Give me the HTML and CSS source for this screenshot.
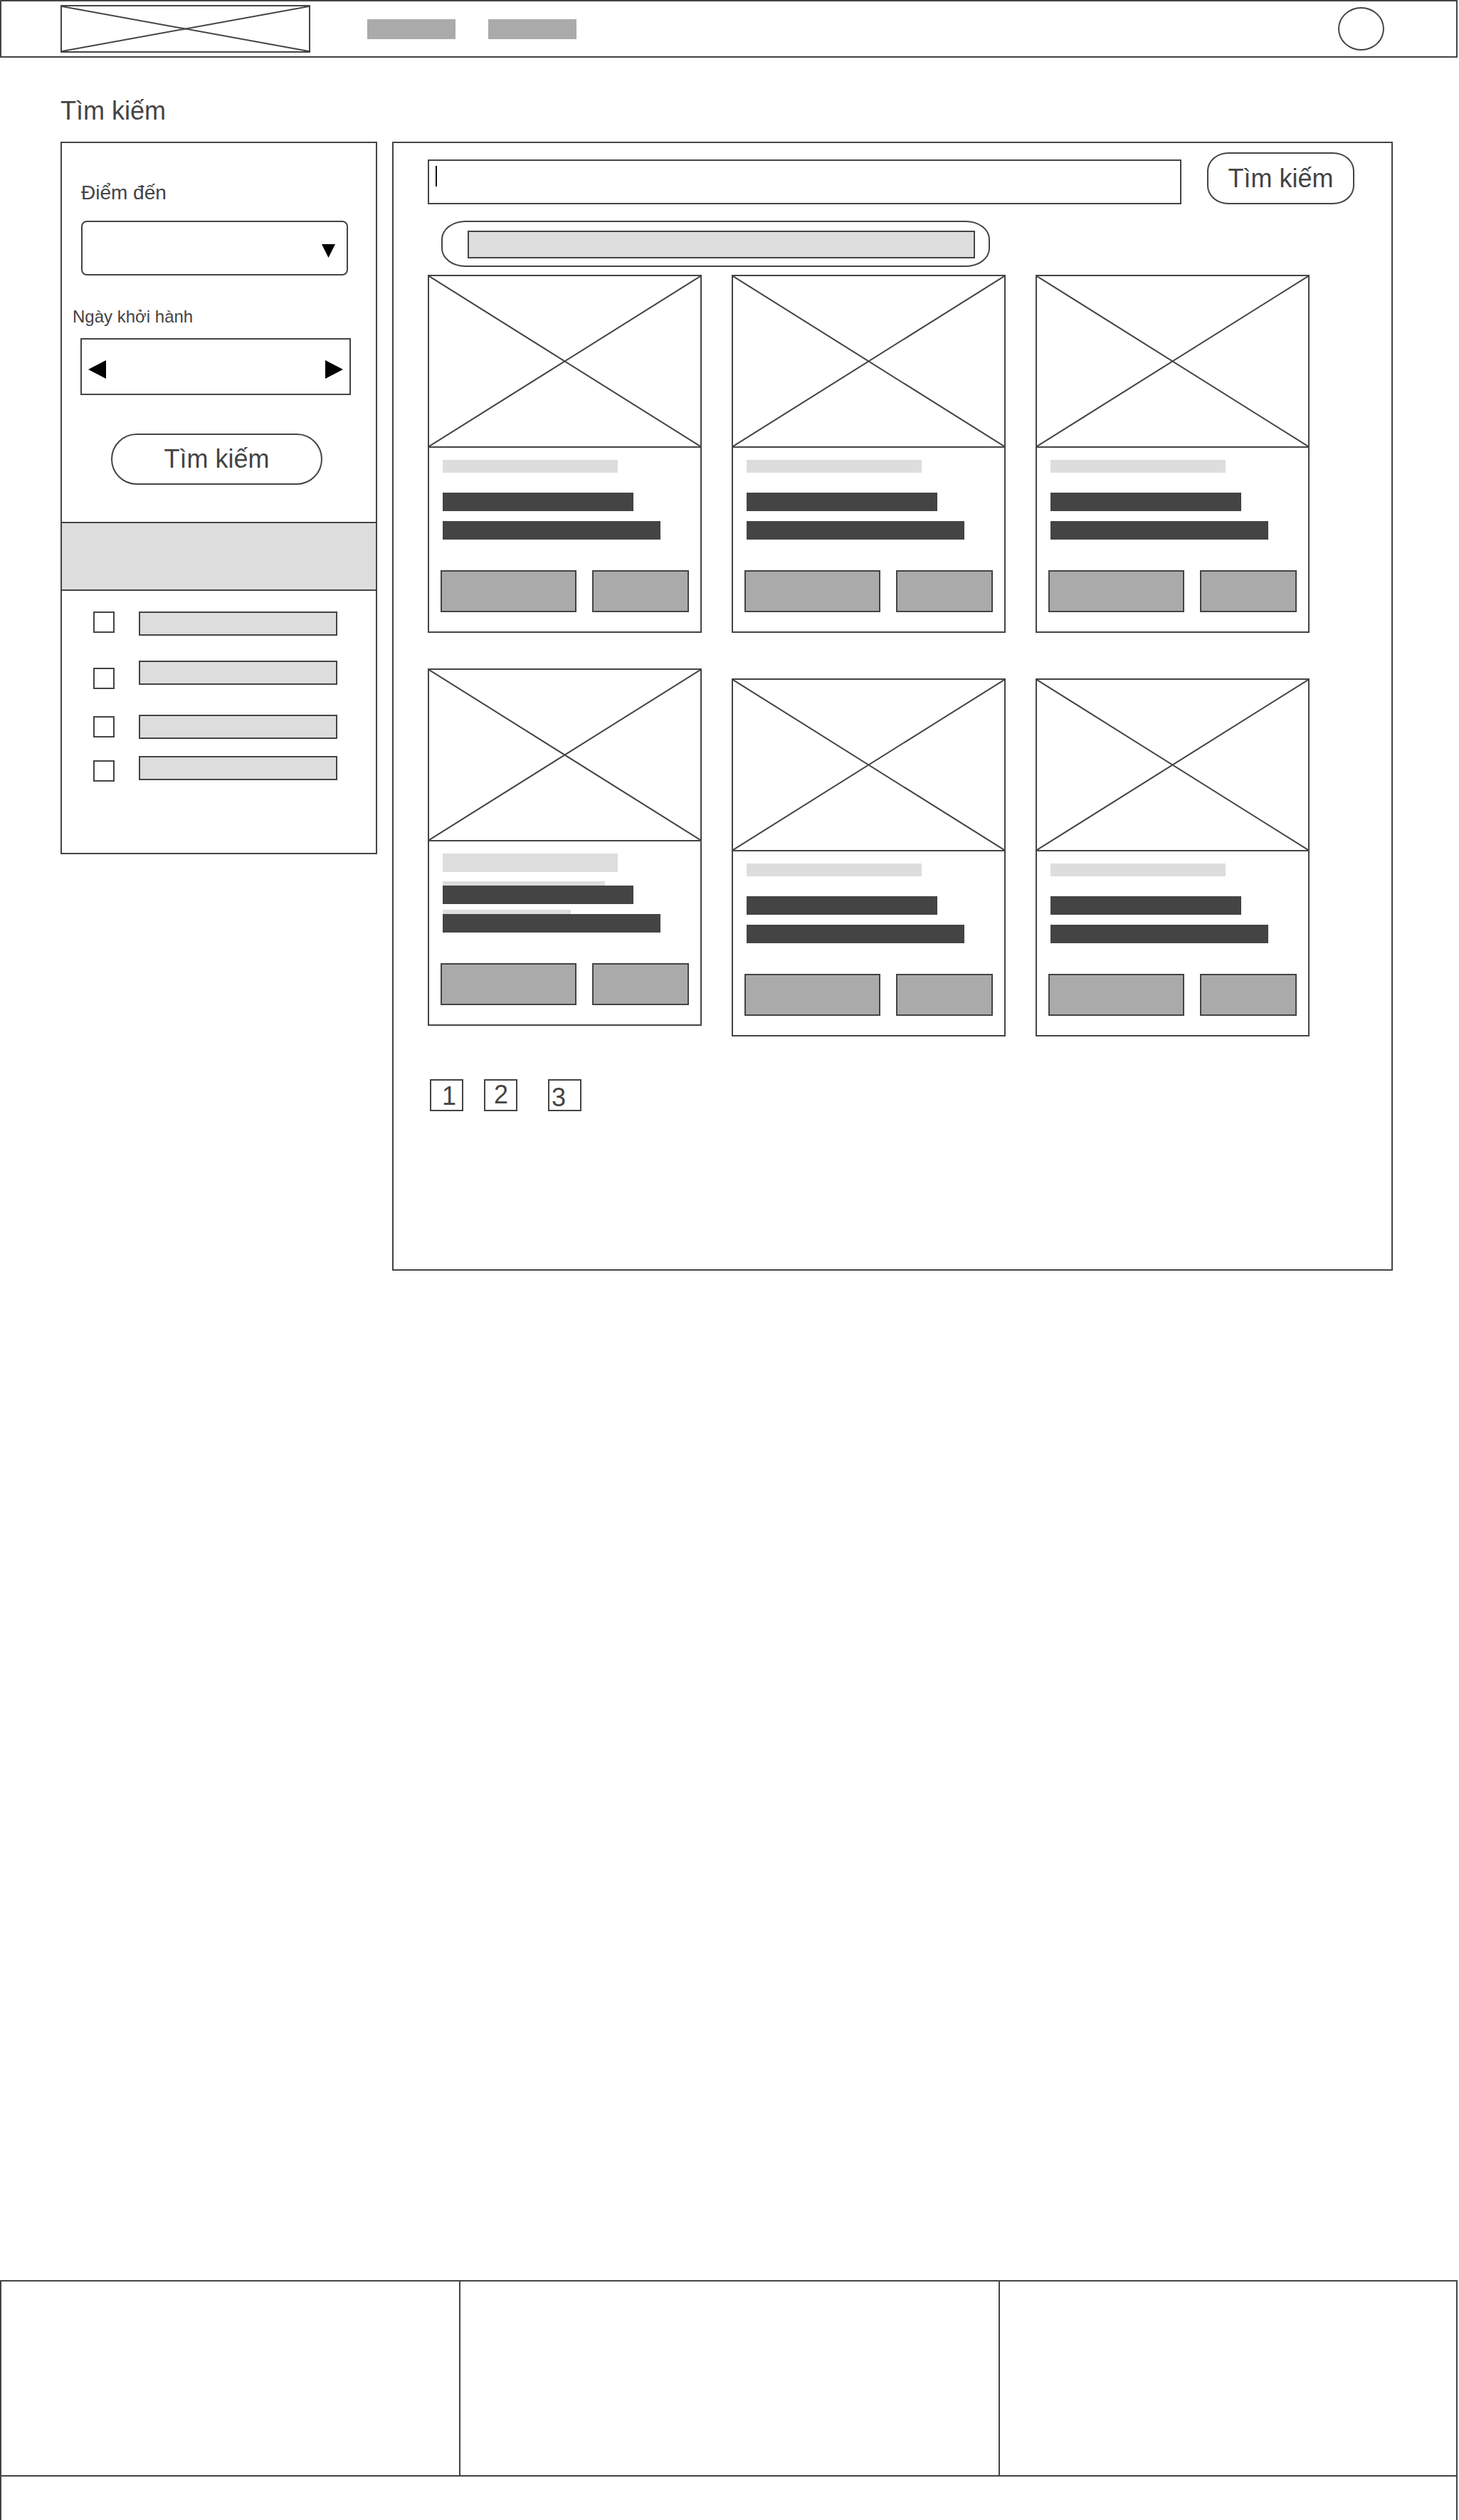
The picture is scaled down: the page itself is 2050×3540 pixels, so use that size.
FILE: index.html
```html
<!DOCTYPE html>
<html lang="vi">

<head>
    <meta charset="UTF-8">
    <meta name="viewport" content="width=device-width, initial-scale=1.0">
    <title>Tìm kiếm tour</title>

    <link rel="stylesheet" href="styles.css">
</head>

<body>
    <div class="page">
        <header class="topbar">
            <div class="logo">
                <svg class="x-mark" viewBox="0 0 100 100" preserveAspectRatio="none">
                    <line x1="0" y1="0" x2="100" y2="100" />
                    <line x1="100" y1="0" x2="0" y2="100" />
                </svg>
            </div>
            <span class="nav-item"></span>
            <span class="nav-item"></span>
            <span class="avatar"></span>
        </header>

        <main class="content">
            <h1 class="page-title">Tìm kiếm</h1>

            <div class="layout">
                <!-- bộ lọc bên trái -->
                <aside class="filter">
                    <label class="field-label">Điểm đến</label>
                    <div class="select-box">
                        <svg class="arrow-down" width="19" height="19" viewBox="0 0 19 19">
                            <polygon points="0,0 19,0 9.5,19" />
                        </svg>
                    </div>

                    <label class="field-label small">Ngày khởi hành</label>
                    <div class="date-box">
                        <svg class="arrow-side" width="25" height="26" viewBox="0 0 25 26">
                            <polygon points="25,0 25,26 0,13" />
                        </svg>
                        <svg class="arrow-side" width="25" height="26" viewBox="0 0 25 26">
                            <polygon points="0,0 25,13 0,26" />
                        </svg>
                    </div>

                    <button type="button" class="pill-btn">Tìm kiếm</button>

                    <div class="filter-band"></div>

                    <ul class="check-list">
                        <li class="check-item"><span class="check-box"></span><span class="check-label"></span></li>
                        <li class="check-item"><span class="check-box"></span><span class="check-label"></span></li>
                        <li class="check-item"><span class="check-box"></span><span class="check-label"></span></li>
                        <li class="check-item"><span class="check-box"></span><span class="check-label"></span></li>
                    </ul>
                </aside>

                <!-- kết quả -->
                <section class="results">
                    <div class="search-row">
                        <div class="search-input"><span class="caret"></span></div>
                        <button type="button" class="search-btn">Tìm kiếm</button>
                    </div>

                    <div class="chip">
                        <div class="chip-bar"></div>
                    </div>

                    <div class="card-row">
                        <div class="card">
                            <div class="card-img">
                                <svg class="x-mark" viewBox="0 0 100 100" preserveAspectRatio="none">
                                    <line x1="0" y1="0" x2="100" y2="100" />
                                    <line x1="100" y1="0" x2="0" y2="100" />
                                </svg>
                            </div>
                            <div class="card-body">
                                <div class="line-light"></div>
                                <div class="line-dark"></div>
                                <div class="line-dark long"></div>
                                <div class="card-actions">
                                    <span class="btn-main"></span>
                                    <span class="btn-sub"></span>
                                </div>
                            </div>
                        </div>
                        <div class="card">
                            <div class="card-img">
                                <svg class="x-mark" viewBox="0 0 100 100" preserveAspectRatio="none">
                                    <line x1="0" y1="0" x2="100" y2="100" />
                                    <line x1="100" y1="0" x2="0" y2="100" />
                                </svg>
                            </div>
                            <div class="card-body">
                                <div class="line-light"></div>
                                <div class="line-dark"></div>
                                <div class="line-dark long"></div>
                                <div class="card-actions">
                                    <span class="btn-main"></span>
                                    <span class="btn-sub"></span>
                                </div>
                            </div>
                        </div>
                        <div class="card">
                            <div class="card-img">
                                <svg class="x-mark" viewBox="0 0 100 100" preserveAspectRatio="none">
                                    <line x1="0" y1="0" x2="100" y2="100" />
                                    <line x1="100" y1="0" x2="0" y2="100" />
                                </svg>
                            </div>
                            <div class="card-body">
                                <div class="line-light"></div>
                                <div class="line-dark"></div>
                                <div class="line-dark long"></div>
                                <div class="card-actions">
                                    <span class="btn-main"></span>
                                    <span class="btn-sub"></span>
                                </div>
                            </div>
                        </div>
                    </div>

                    <div class="card-row second">
                        <div class="card">
                            <div class="card-img">
                                <svg class="x-mark" viewBox="0 0 100 100" preserveAspectRatio="none">
                                    <line x1="0" y1="0" x2="100" y2="100" />
                                    <line x1="100" y1="0" x2="0" y2="100" />
                                </svg>
                            </div>
                            <div class="card-body">
                                <div class="line-light tall"></div>
                                <div class="line-faint"></div>
                                <div class="line-dark"></div>
                                <div class="line-faint short"></div>
                                <div class="line-dark long"></div>
                                <div class="card-actions">
                                    <span class="btn-main"></span>
                                    <span class="btn-sub"></span>
                                </div>
                            </div>
                        </div>
                        <div class="card low">
                            <div class="card-img">
                                <svg class="x-mark" viewBox="0 0 100 100" preserveAspectRatio="none">
                                    <line x1="0" y1="0" x2="100" y2="100" />
                                    <line x1="100" y1="0" x2="0" y2="100" />
                                </svg>
                            </div>
                            <div class="card-body">
                                <div class="line-light"></div>
                                <div class="line-dark"></div>
                                <div class="line-dark long"></div>
                                <div class="card-actions">
                                    <span class="btn-main"></span>
                                    <span class="btn-sub"></span>
                                </div>
                            </div>
                        </div>
                        <div class="card low">
                            <div class="card-img">
                                <svg class="x-mark" viewBox="0 0 100 100" preserveAspectRatio="none">
                                    <line x1="0" y1="0" x2="100" y2="100" />
                                    <line x1="100" y1="0" x2="0" y2="100" />
                                </svg>
                            </div>
                            <div class="card-body">
                                <div class="line-light"></div>
                                <div class="line-dark"></div>
                                <div class="line-dark long"></div>
                                <div class="card-actions">
                                    <span class="btn-main"></span>
                                    <span class="btn-sub"></span>
                                </div>
                            </div>
                        </div>
                    </div>

                    <div class="pager">
                        <span class="page-num"><span>1</span></span>
                        <span class="page-num"><span>2</span></span>
                        <span class="page-num"><span>3</span></span>
                    </div>
                </section>
            </div>
        </main>

        <footer class="site-footer">
            <div class="footer-cols">
                <div class="footer-col"></div>
                <div class="footer-col"></div>
                <div class="footer-col"></div>
            </div>
            <div class="footer-bottom"></div>
        </footer>
    </div>
</body>

</html>
```

FILE: styles.css
```css
* {
    box-sizing: border-box;
}

body {
    margin: 0;
    font-family: "Liberation Sans", Arial, sans-serif;
    color: #444;
    background: #fff;
}

.page {
    width: 2048px;
    min-height: 3540px;
    display: flex;
    flex-direction: column;
}

/* header */
.topbar {
    height: 81px;
    border: 2px solid #444;
    display: flex;
    align-items: center;
    padding-left: 83px;
}

.logo {
    width: 351px;
    height: 67px;
    border: 2px solid #444;
}

.x-mark {
    display: block;
    width: 100%;
    height: 100%;
}

.x-mark line {
    stroke: #444;
    stroke-width: 2;
    vector-effect: non-scaling-stroke;
}

.nav-item {
    width: 124px;
    height: 28px;
    background: #aaa;
    margin-left: 80px;
}

.nav-item + .nav-item {
    margin-left: 46px;
}

.avatar {
    width: 65px;
    height: 61px;
    border: 2px solid #444;
    border-radius: 50%;
    margin-left: auto;
    margin-right: 101px;
}

/* main */
.content {
    padding-left: 85px;
}

.page-title {
    margin: 57px 0 0;
    font-size: 36px;
    font-weight: normal;
    line-height: 1;
}

.layout {
    display: flex;
    align-items: flex-start;
    gap: 21px;
    margin-top: 25px;
}

/* filter */
.filter {
    width: 445px;
    height: 1001px;
    border: 2px solid #444;
}

.field-label {
    display: block;
    font-size: 28px;
    line-height: 1;
    margin: 56px 0 0 27px;
}

.field-label.small {
    font-size: 24px;
    margin: 46px 0 0 15px;
}

.select-box {
    width: 375px;
    height: 77px;
    margin: 25px 0 0 27px;
    border: 2px solid #444;
    border-radius: 8px;
    display: flex;
    align-items: center;
    justify-content: flex-end;
    padding-right: 16px;
}

.arrow-down {
    margin-top: 8px;
}

.date-box {
    width: 380px;
    height: 80px;
    margin: 18px 0 0 26px;
    border: 2px solid #444;
    display: flex;
    align-items: center;
    justify-content: space-between;
    padding: 0 9px;
}

.arrow-side {
    margin-top: 8px;
}

.pill-btn {
    display: block;
    width: 297px;
    height: 72px;
    margin: 54px 0 0 69px;
    border: 2px solid #444;
    border-radius: 36px;
    background: #fff;
    color: #444;
    font-family: inherit;
    font-size: 36px;
    padding: 0;
}

.filter-band {
    height: 97px;
    margin-top: 52px;
    background: #ddd;
    border-top: 2px solid #444;
    border-bottom: 2px solid #444;
}

.check-list {
    list-style: none;
    margin: 0;
    padding: 0 0 0 44px;
}

.check-item {
    display: flex;
    align-items: flex-start;
    height: 34px;
    margin-top: 29px;
}

.check-item:nth-child(2) {
    margin-top: 35px;
}

.check-item:nth-child(3) {
    margin-top: 42px;
}

.check-item:nth-child(4) {
    margin-top: 24px;
}

.check-box {
    width: 30px;
    height: 30px;
    border: 2px solid #444;
}

.check-item:nth-child(2) .check-box {
    margin-top: 10px;
}

.check-item:nth-child(3) .check-box {
    margin-top: 2px;
}

.check-item:nth-child(4) .check-box {
    margin-top: 6px;
}

.check-label {
    width: 279px;
    height: 34px;
    margin-left: 34px;
    background: #ddd;
    border: 2px solid #444;
}

/* results */
.results {
    width: 1406px;
    height: 1586px;
    border: 2px solid #444;
    padding: 13px 0 0 48px;
}

.search-row {
    display: flex;
    align-items: flex-end;
}

.search-input {
    width: 1059px;
    height: 63px;
    border: 2px solid #444;
    padding: 7px 0 0 9px;
}

.caret {
    display: block;
    width: 2px;
    height: 29px;
    background: #111;
}

.search-btn {
    width: 207px;
    height: 73px;
    margin-left: 36px;
    border: 2px solid #444;
    border-radius: 30px / 26px;
    background: #fff;
    color: #444;
    font-family: inherit;
    font-size: 36px;
    padding: 0;
}

.chip {
    width: 771px;
    height: 65px;
    margin: 23px 0 0 19px;
    border: 2px solid #444;
    border-radius: 34px / 26px;
    padding: 12px 0 0 35px;
}

.chip-bar {
    width: 713px;
    height: 39px;
    background: #ddd;
    border: 2px solid #444;
}

.card-row {
    display: flex;
    align-items: flex-start;
    gap: 42px;
    margin-top: 11px;
}

.card-row.second {
    margin-top: 50px;
}

.card {
    width: 385px;
    border: 2px solid #444;
}

.card.low {
    margin-top: 14px;
}

.card-img {
    height: 241px;
    border-bottom: 2px solid #444;
}

.card-body {
    padding: 17px 0 27px 19px;
}

.line-light {
    width: 246px;
    height: 18px;
    background: #ddd;
}

.line-light.tall {
    height: 26px;
}

.line-faint {
    width: 228px;
    height: 6px;
    margin-top: 13px;
    background: #ddd;
}

.line-faint.short {
    width: 180px;
    margin-top: 8px;
}

.line-dark {
    width: 268px;
    height: 26px;
    margin-top: 28px;
    background: #444;
}

.line-dark.long {
    width: 306px;
    margin-top: 14px;
}

.line-faint + .line-dark,
.line-faint + .line-dark.long {
    margin-top: 0;
}

.card-actions {
    display: flex;
    gap: 22px;
    margin: 43px 0 0 -3px;
}

.btn-main,
.btn-sub {
    height: 59px;
    background: #aaa;
    border: 2px solid #444;
}

.btn-main {
    width: 191px;
}

.btn-sub {
    width: 136px;
}

/* pagination */
.pager {
    display: flex;
    margin: 60px 0 0 3px;
}

.page-num {
    width: 47px;
    height: 45px;
    border: 2px solid #444;
    font-size: 36px;
    line-height: 36px;
    padding: 4px 0 0 15px;
}

.page-num:nth-child(2) {
    margin-left: 29px;
    padding: 2px 0 0 12px;
}

.page-num:nth-child(3) {
    margin-left: 43px;
    padding: 6px 0 0 3px;
}

/* footer */
.site-footer {
    margin-top: auto;
}

.footer-cols {
    display: flex;
    height: 276px;
    border: 2px solid #444;
}

.footer-col {
    flex: 1;
}

.footer-col:nth-child(1) {
    flex: none;
    width: 645px;
    border-right: 2px solid #444;
}

.footer-col:nth-child(2) {
    flex: none;
    width: 758px;
    border-right: 2px solid #444;
}

.footer-bottom {
    height: 61px;
    border-left: 2px solid #444;
    border-right: 2px solid #444;
}
```
